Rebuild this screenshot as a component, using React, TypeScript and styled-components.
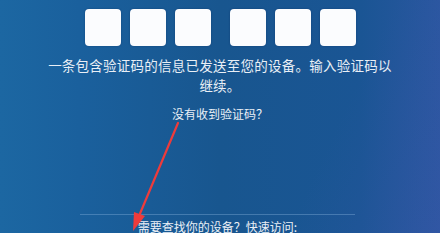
import React from "react";
import styled, { createGlobalStyle } from "styled-components";

const Global = createGlobalStyle`
  html, body { margin: 0; padding: 0; }
  body {
    width: 440px;
    height: 233px;
    overflow: hidden;
    font-family: "Noto Sans CJK SC", "Noto Sans", sans-serif;
  }
`;

const Page = styled.div`
  position: relative;
  width: 440px;
  height: 233px;
  box-sizing: border-box;
  padding-top: 9px;
  display: flex;
  flex-direction: column;
  align-items: center;
  overflow: hidden;
  color: #e9eff6;
  background:
    linear-gradient(115deg, rgba(255,255,255,0) 72%, rgba(70,85,175,0.25) 100%),
    linear-gradient(90deg, #1c67a2 0%, #1a609d 18%, #18568f 50%, #1a5594 82%, #2a57a0 100%);
`;

const CodeRow = styled.div`
  display: flex;
  gap: 19px;
  margin-left: 1px;
`;

const BoxGroup = styled.div`
  display: flex;
  gap: 9px;
`;

const CodeBox = styled.div`
  width: 36px;
  height: 37px;
  border-radius: 4px;
  background: #fbfcfe;
  box-shadow: 0 0 2px rgba(0, 30, 80, 0.4);
`;

const Message = styled.p`
  margin: 9px 0 0;
  width: 350px;
  text-align: center;
  font-size: 13.5px;
  line-height: 20px;
  letter-spacing: 0.25px;
  text-spacing-trim: space-all;
`;

const Resend = styled.p`
  margin: 11px 0 0;
  font-size: 12px;
  line-height: 16px;
  text-align: center;
`;

const Footer = styled.div`
  margin-top: auto;
  width: 275px;
  border-top: 1px solid rgba(150, 190, 230, 0.35);
  padding-top: 4px;
  text-align: center;
  font-size: 12px;
  line-height: 16px;
  height: 14px;
  margin-left: -5px;
`;

const Arrow = styled.svg`
  position: absolute;
  left: 0;
  top: 0;
  width: 440px;
  height: 233px;
  pointer-events: none;
`;

export default function App() {
  return (
    <>
      <Global />
      <Page>
        <CodeRow>
          <BoxGroup>
            <CodeBox />
            <CodeBox />
            <CodeBox />
          </BoxGroup>
          <BoxGroup>
            <CodeBox />
            <CodeBox />
            <CodeBox />
          </BoxGroup>
        </CodeRow>
        <Message>一条包含验证码的信息已发送至您的设备。输入验证码以继续。</Message>
        <Resend>没有收到验证码？</Resend>
        <Footer>需要查找你的设备？快速访问:</Footer>
        <Arrow viewBox="0 0 440 233">
          <line x1="178" y1="123" x2="139" y2="216" stroke="#ee3b3b" strokeWidth="2.2" strokeLinecap="round" />
          <polygon points="133,231 134,212 145,216" fill="#ee3b3b" />
        </Arrow>
      </Page>
    </>
  );
}
